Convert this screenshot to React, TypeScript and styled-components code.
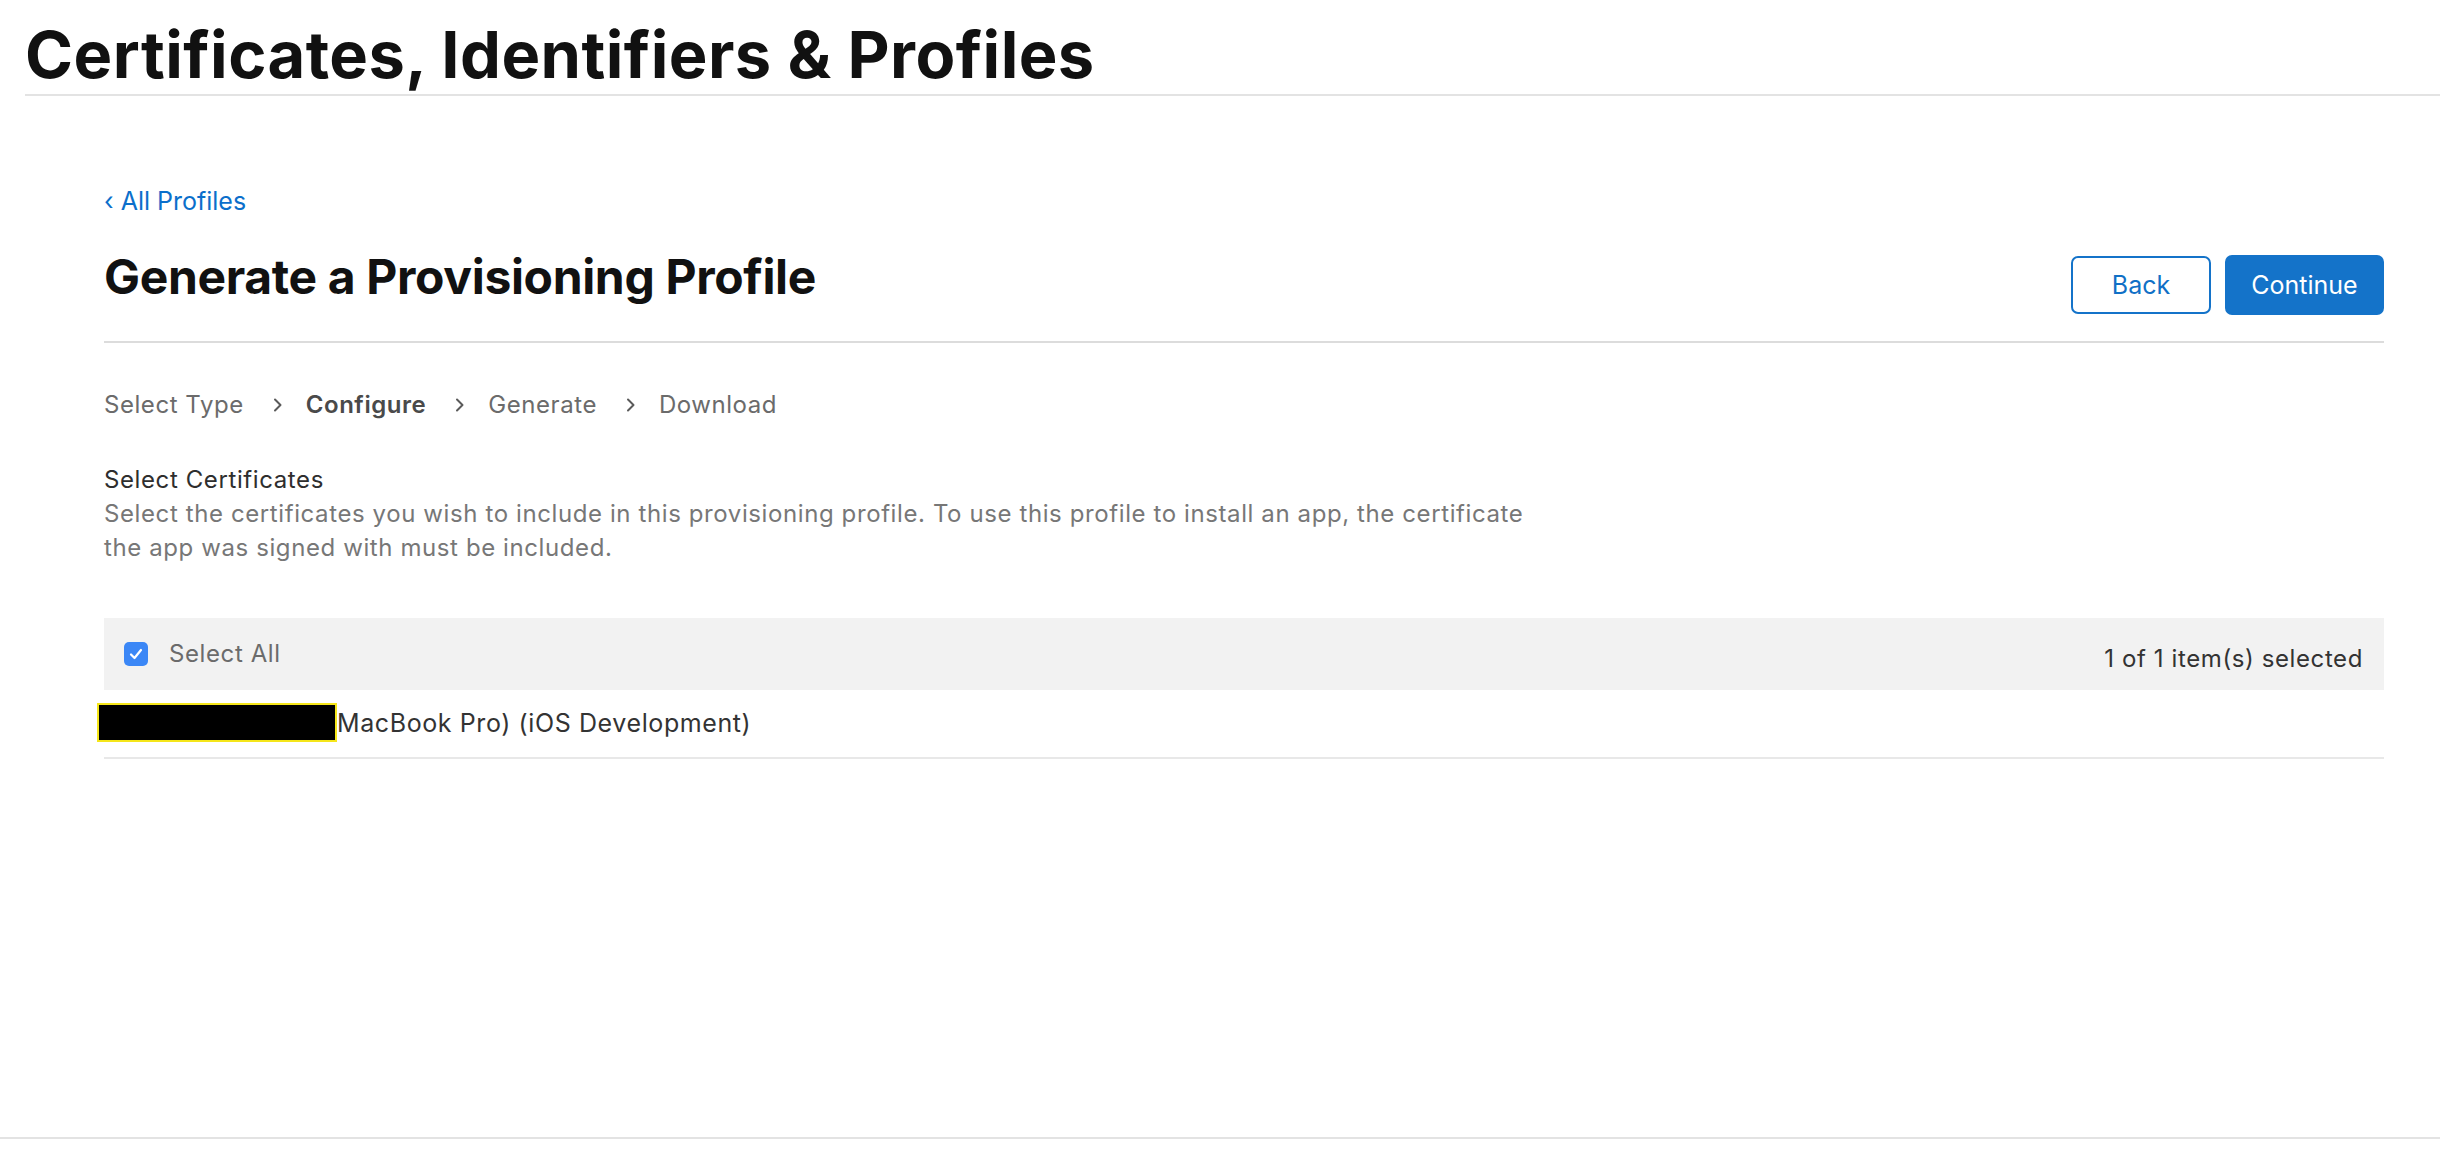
import React from 'react';
import styled, { createGlobalStyle } from 'styled-components';

const GlobalStyle = createGlobalStyle`
    html, body {
        margin: 0;
        padding: 0;
        background: #fff;
    }

    body {
        font-family: Inter, "Noto Sans", "Liberation Sans", sans-serif;
        color: #333;
        -webkit-font-smoothing: antialiased;
    }
`;

const Page = styled.div`
    min-height: 1156px;
    display: flex;
    flex-direction: column;
`;

const Header = styled.header`
    margin-left: 25px;
    padding: 22px 0 7px;
    border-bottom: 2px solid #e3e3e3;
`;

const Title = styled.h1`
    margin: 0;
    font-size: 65px;
    line-height: 65px;
    font-weight: 700;
    letter-spacing: 0.45px;
    color: #111;
`;

const Main = styled.main`
    flex: 1;
    padding: 0 56px 0 104px;
`;

const BackLink = styled.a`
    display: block;
    margin-top: 88px;
    font-size: 25px;
    line-height: 34px;
    color: #0b6fcb;
    text-decoration: none;
`;

const HeadingRow = styled.div`
    display: flex;
    align-items: flex-start;
    justify-content: space-between;
    margin-top: 30px;
    padding-bottom: 26px;
    border-bottom: 2px solid #dcdcdc;
`;

const Heading = styled.h2`
    margin: 0;
    font-size: 48px;
    line-height: 58px;
    font-weight: 700;
    letter-spacing: -0.35px;
    color: #111;
`;

const Actions = styled.div`
    display: flex;
    gap: 14px;
    margin-top: 7px;
`;

const Button = styled.button<{ $primary?: boolean }>`
    box-sizing: border-box;
    height: ${p => (p.$primary ? '60px' : '58px')};
    margin-top: ${p => (p.$primary ? '0' : '1px')};
    width: ${p => (p.$primary ? '159px' : '140px')};
    border-radius: 7px;
    border: 2px solid #1473c9;
    background: ${p => (p.$primary ? '#1473c9' : '#fff')};
    color: ${p => (p.$primary ? '#fff' : '#1070c6')};
    font-family: inherit;
    font-size: 25px;
    padding: 0;
    cursor: pointer;
`;

const Steps = styled.ol`
    display: flex;
    align-items: center;
    list-style: none;
    margin: 45px 0 0;
    padding: 0;
    font-size: 24px;
    line-height: 34px;
    letter-spacing: 0.55px;
`;

const Step = styled.li<{ $active?: boolean }>`
    display: flex;
    align-items: center;
    color: ${p => (p.$active ? '#4a4a4a' : '#6b6b6b')};
    font-weight: ${p => (p.$active ? 600 : 400)};
`;

const Chevron = styled.svg`
    margin: 0 23px 0 29px;
    flex-shrink: 0;
`;

const SectionTitle = styled.div`
    margin-top: 41px;
    font-size: 24px;
    line-height: 34px;
    letter-spacing: 0.6px;
    color: #2e2e2e;
`;

const Description = styled.p`
    margin: 0;
    max-width: 1440px;
    font-size: 24px;
    line-height: 34px;
    letter-spacing: 0.6px;
    color: #777;
`;

const ListHeader = styled.div`
    display: flex;
    align-items: center;
    justify-content: space-between;
    height: 72px;
    margin-top: 53px;
    padding: 0 21px 0 20px;
    background: #f2f2f2;
    font-size: 24px;
    line-height: 34px;
    letter-spacing: 0.6px;
`;

const SelectAll = styled.label`
    display: flex;
    align-items: center;
    gap: 21px;
    color: #6b6b6b;
`;

const CheckBox = styled.span`
    display: flex;
    align-items: center;
    justify-content: center;
    width: 24px;
    height: 24px;
    border-radius: 5px;
    background: #3b87f6;
`;

const Count = styled.span`
    padding-top: 9px;
    color: #333;
`;

const CertRow = styled.div`
    display: flex;
    align-items: center;
    padding: 13px 0 15px;
    border-bottom: 2px solid #e8e8e8;
    font-size: 25px;
    line-height: 34px;
    letter-spacing: 0.6px;
    color: #333;
`;

const Redacted = styled.span`
    box-sizing: border-box;
    width: 240px;
    height: 39px;
    margin-left: -7px;
    background: #000;
    border: 2px solid #f5e61a;
    flex-shrink: 0;
`;

const Footer = styled.footer`
    height: 17px;
    border-top: 2px solid #e3e3e3;
`;

const steps = ['Select Type', 'Configure', 'Generate', 'Download'];

function StepChevron() {
    return (
        <Chevron width="10" height="14" viewBox="0 0 10 14">
            <path d="M2 1.5 L7.5 7 L2 12.5" fill="none" stroke="#5a5a5a" strokeWidth="2" strokeLinecap="round" strokeLinejoin="round" />
        </Chevron>
    );
}

export default function App() {
    return (
        <Page>
            <GlobalStyle />
            <Header>
                <Title>Certificates, Identifiers &amp; Profiles</Title>
            </Header>
            <Main>
                <BackLink href="#">‹ All Profiles</BackLink>
                <HeadingRow>
                    <Heading>Generate a Provisioning Profile</Heading>
                    <Actions>
                        <Button>Back</Button>
                        <Button $primary>Continue</Button>
                    </Actions>
                </HeadingRow>

                <Steps>
                    {steps.map((s, i) => (
                        <Step key={s} $active={s === 'Configure'}>
                            {s}
                            {i < steps.length - 1 && <StepChevron />}
                        </Step>
                    ))}
                </Steps>

                <SectionTitle>Select Certificates</SectionTitle>
                <Description>
                    Select the certificates you wish to include in this provisioning profile. To use this profile to install an app, the certificate the app was signed with must be included.
                </Description>

                <ListHeader>
                    <SelectAll>
                        <CheckBox>
                            <svg width="14" height="12" viewBox="0 0 14 12">
                                <path d="M2 6.5 L5.5 10 L12 2" fill="none" stroke="#fff" strokeWidth="2.2" strokeLinecap="round" strokeLinejoin="round" />
                            </svg>
                        </CheckBox>
                        Select All
                    </SelectAll>
                    <Count>1 of 1 item(s) selected</Count>
                </ListHeader>
                <CertRow>
                    <Redacted />
                    MacBook Pro) (iOS Development)
                </CertRow>
            </Main>
            <Footer />
        </Page>
    );
}
